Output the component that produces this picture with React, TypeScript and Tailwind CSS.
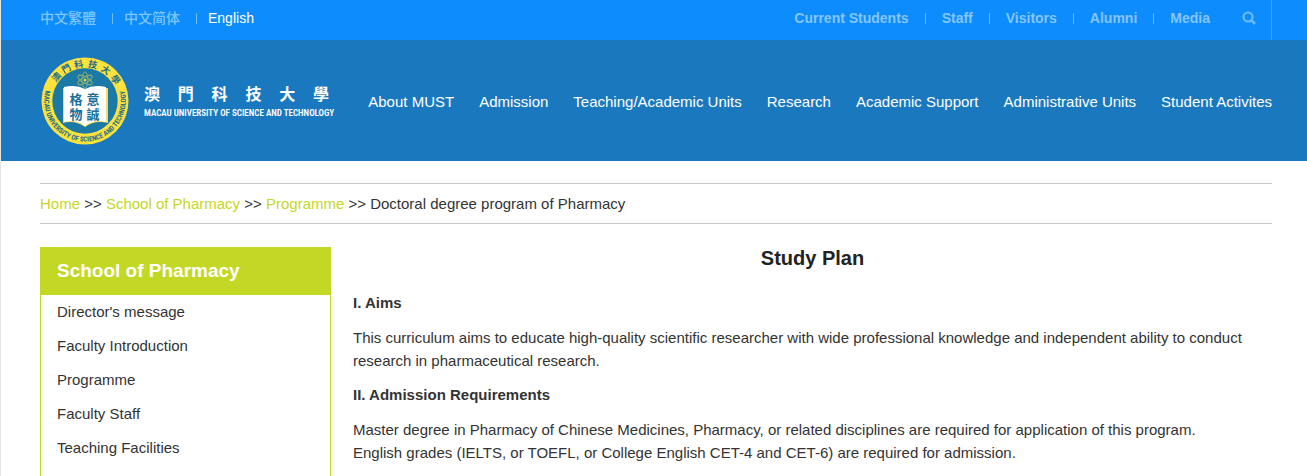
import React from "react";

const languages = ["中文繁體", "中文简体", "English"];
const audience = ["Current Students", "Staff", "Visitors", "Alumni", "Media"];
const mainNav = [
  "About MUST",
  "Admission",
  "Teaching/Academic Units",
  "Research",
  "Academic Support",
  "Administrative Units",
  "Student Activites",
];
const sideNav = [
  "Director's message",
  "Faculty Introduction",
  "Programme",
  "Faculty Staff",
  "Teaching Facilities",
];
const crumbs = ["Home", "School of Pharmacy", "Programme"];

const ringHan = "澳門科技大學".split("");
const ringAngles = [-50, -30, -10, 12, 34, 55];
const ringLatin = "MACAU UNIVERSITY OF SCIENCE AND TECHNOLOGY";

function Emblem() {
  return (
    <svg viewBox="-44 -44 88 88" className="size-[88px] shrink-0 overflow-visible" aria-hidden="true">
      <defs>
        <path id="latin-ring" d="M-38.500 -13.300A40.700 40.700 0 1 0 38.500 -13.300" />
      </defs>
      <circle r="43.500" fill="#fde23c" />
      <circle r="32.700" fill="#1a7aa5" />
      <g fill="#1b6f8c" fontFamily="'Noto Sans CJK TC', sans-serif" fontSize="9" fontWeight="700" textAnchor="middle">
        {ringHan.map((c, i) => (
          <text key={c} y="-34" transform={`rotate(${ringAngles[i]})`}>
            {c}
          </text>
        ))}
      </g>
      <text fill="#1b6f8c" fontFamily="'Roboto Condensed', 'Liberation Sans Narrow', sans-serif" fontSize="7" fontWeight="700" textAnchor="middle">
        <textPath href="#latin-ring" startOffset="50%">{ringLatin}</textPath>
      </text>
      <g fill="none" stroke="#8fb070" strokeWidth="0.900">
        <ellipse cx="0" cy="-21" rx="8" ry="3" transform="rotate(30 0 -21)" />
        <ellipse cx="0" cy="-21" rx="8" ry="3" transform="rotate(90 0 -21)" />
        <ellipse cx="0" cy="-21" rx="8" ry="3" transform="rotate(150 0 -21)" />
      </g>
      <circle cx="0" cy="-21" r="1.500" fill="#d9d548" />
      <path d="M-22 -13V22Q-10 19 0 26Q10 19 23 22V-13L21 -13V19Q9 17 0 24Q-9 17-21 19V-13Z" fill="#f4dc62" />
      <path d="M-21 -14Q-9 -17 0 -12Q9 -17 21 -14V21Q9 18 0 25Q-9 18 -21 21Z" fill="#fff" />
      <g fill="#1a7099" fontFamily="'Noto Sans CJK TC', sans-serif" fontSize="13" fontWeight="700" textAnchor="middle">
        <text x="-9" y="3">格</text>
        <text x="8" y="3">意</text>
        <text x="-9" y="18">物</text>
        <text x="8" y="18">誠</text>
      </g>
    </svg>
  );
}

function Brand() {
  return (
    <a href="#" className="flex items-center gap-[15px] text-white" aria-label="Macau University of Science and Technology">
      <Emblem />
      <svg viewBox="0 -8 196 50" className="h-[50px] w-[196px] shrink-0" fill="currentColor" aria-hidden="true">
        <g fontFamily="'Noto Sans CJK TC', sans-serif" fontSize="16" fontWeight="700" textAnchor="middle">
          {ringHan.map((c, i) => (
            <text key={c} x={8 + i * 33.8} y="16">
              {c}
            </text>
          ))}
        </g>
        <text x="0" y="32" fontFamily="'Roboto Condensed', 'Liberation Sans Narrow', sans-serif" fontSize="9" fontWeight="600">
          MACAU UNIVERSITY OF SCIENCE AND TECHNOLOGY
        </text>
      </svg>
    </a>
  );
}

function TopBar() {
  return (
    <div className="flex h-10 items-center justify-between bg-[#0d8cfd] pl-[39px] pr-[35px]">
      <ul className="flex items-center pb-1 text-sm leading-5">
        {languages.map((l, i) => (
          <li key={l} className="flex items-center">
            {i > 0 && <span className="ml-4 mr-[11px] h-[11px] w-px bg-[#6bbcff]" />}
            <a href="#" className={l === "English" ? "text-white" : "font-medium text-[#7fc5fb]"}>
              {l}
            </a>
          </li>
        ))}
      </ul>
      <div className="flex h-full items-center border-r border-[#42a5fd] pb-1 pr-[15px]">
        <ul className="flex items-center text-sm font-bold leading-5 text-[#86c5fe]">
          {audience.map((l, i) => (
            <li key={l} className="flex items-center">
              {i > 0 && <span className="mx-4 h-[11px] w-px bg-[#6bbcff]" />}
              <a href="#">{l}</a>
            </li>
          ))}
        </ul>
        <button type="button" aria-label="Search" className="ml-8 text-[#6bbcff]">
          <svg viewBox="0 0 14 14" className="block size-[14px]" fill="none" stroke="currentColor" strokeWidth="2.200">
            <circle cx="6" cy="6" r="4.500" />
            <path d="M9.200 9.200l3.800 3.800" strokeWidth="2.600" />
          </svg>
        </button>
      </div>
    </div>
  );
}

export default function App() {
  return (
    <div className="min-h-screen border-l border-[#e5e5e5] bg-white font-['Liberation_Sans','Noto_Sans_CJK_SC',sans-serif] text-[15px] leading-[23px] text-[#333]">
      <header>
        <TopBar />
        <div className="flex items-center justify-between bg-[#1a79be] pb-4 pl-10 pr-[35px] pt-[17px]">
          <Brand />
          <nav aria-label="Main">
            <ul className="flex gap-[25px] whitespace-nowrap text-white">
              {mainNav.map((n) => (
                <li key={n}>
                  <a href="#">{n}</a>
                </li>
              ))}
            </ul>
          </nav>
        </div>
      </header>

      <div className="pl-[39px] pr-[35px] pt-[22px]">
        <nav aria-label="Breadcrumb" className="border-y border-[#c8c8c8] py-2">
          {crumbs.map((c) => (
            <React.Fragment key={c}>
              <a href="#" className="text-[#c3d825]">
                {c}
              </a>
              {" >> "}
            </React.Fragment>
          ))}
          <span>Doctoral degree program of Pharmacy</span>
        </nav>

        <div className="mt-[23px] flex gap-[22px]">
          <aside className="w-[291px] shrink-0 border border-[#c3d825] pb-4">
            <h2 className="bg-[#c3d825] px-4 pb-3 pt-[11px] text-[19px] font-bold leading-6 text-white">School of Pharmacy</h2>
            <ul>
              {sideNav.map((s) => (
                <li key={s} className="px-4 py-[5px] leading-6">
                  <a href="#">{s}</a>
                </li>
              ))}
            </ul>
          </aside>
          <main className="min-w-0 flex-1">
            <h1 className="text-center text-xl font-bold leading-[23px] text-[#222]">Study Plan</h1>
            <h3 className="mt-[21px] font-bold">I. Aims</h3>
            <p className="mb-[11px] mt-3">
              This curriculum aims to educate high-quality scientific researcher with wide professional knowledge and
              independent ability to conduct research in pharmaceutical research.
            </p>
            <h3 className="font-bold">II. Admission Requirements</h3>
            <p className="mb-[11px] mt-3">
              Master degree in Pharmacy of Chinese Medicines, Pharmacy, or related disciplines are required for
              application of this program.
              <br />
              English grades (IELTS, or TOEFL, or College English CET-4 and CET-6) are required for admission.
            </p>
          </main>
        </div>
      </div>
    </div>
  );
}
